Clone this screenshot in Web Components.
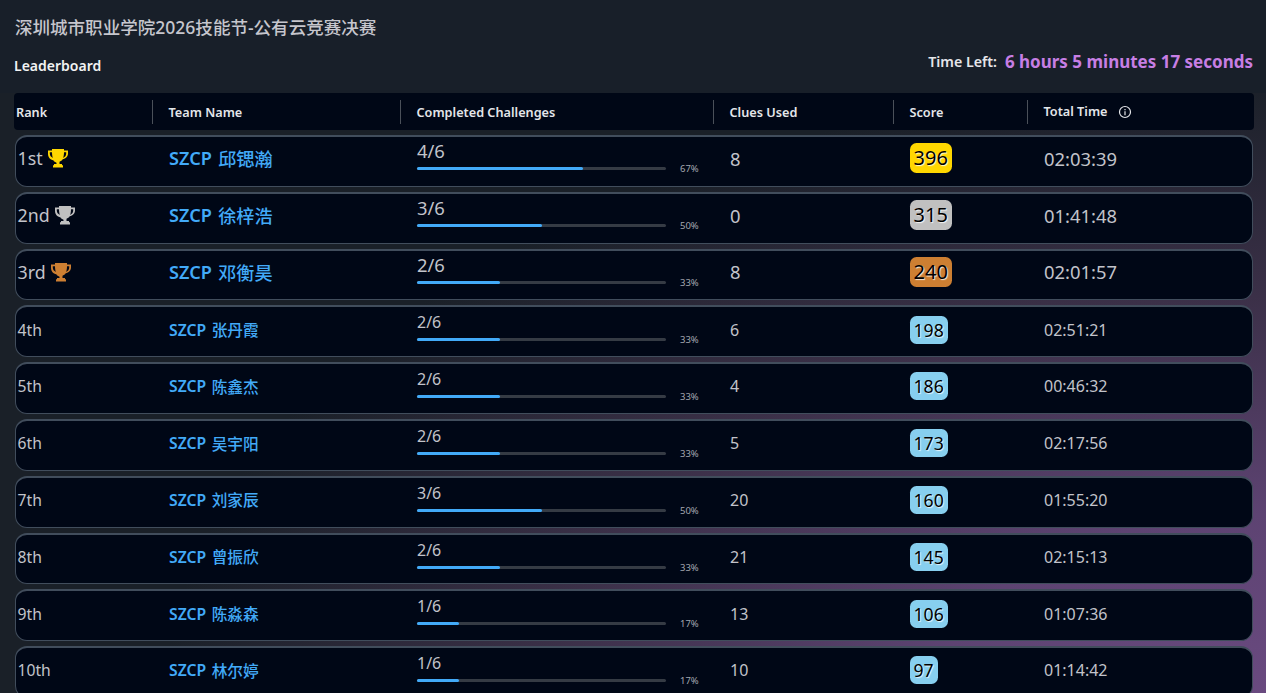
<!DOCTYPE html>
<html><head><meta charset="utf-8">
<style>
html,body{margin:0;height:100%;overflow:hidden}
body{background:#1a2028;font-family:"Noto Sans","Noto Sans CJK SC",sans-serif}
</style></head><body>
<template id="t-app"><style>
:host{display:block;height:693px;overflow:hidden;background:radial-gradient(ellipse 1100px 620px at 1266px 700px,#6a4a80 0%,#5d4372 30%,#3b3048 65%,#1a2028 100%)}
header{box-sizing:border-box;height:93px;background:#181f29;padding:14px 13px 0 15px}
h1{margin:0;font:500 17.55px/26px "Noto Sans","Noto Sans CJK SC",sans-serif;color:#c6c6cd}
.bar{display:flex;justify-content:space-between;align-items:flex-start;margin-top:10px}
.lb{font-size:14px;font-weight:600;color:#f2f3f3;line-height:20px;padding-top:6px;margin-left:-1px}
.tl{display:flex;align-items:center;gap:8px;font-size:14.2px;font-weight:600;color:#e6e6ea;line-height:24px}
.tl b{font-size:17px;font-weight:700;color:#c77ee4}
.list{padding:0 12px 0 14px;display:flex;flex-direction:column}
</style><header><h1><slot name="title"></slot></h1>
<div class="bar"><span class="lb">Leaderboard</span><span class="tl">Time Left: <b>6 hours 5 minutes 17 seconds</b></span></div></header>
<div class="list"><slot></slot></div></template>

<template id="t-head"><style>
:host{display:grid;grid-template-columns:138px 248px 313px 180px 134px 1fr;height:37px;background:#000716;border-radius:4px;align-items:center;font-size:12.7px;font-weight:600;color:#e4e6ea;margin-bottom:5px}
div{height:24px;display:flex;align-items:center;padding-left:15.500px;border-left:1.5px solid #4a5059;box-sizing:border-box}
div:first-of-type{border:0;padding-left:2px}
svg{margin-left:10px}
</style><div>Rank</div><div>Team Name</div><div>Completed Challenges</div><div>Clues Used</div><div>Score</div>
<div><span style="position:relative;top:-1px">Total Time</span><svg width="14" height="14" viewBox="0 0 14 14" fill="none" stroke="#e4e6ea" stroke-width="1.2"><circle cx="7" cy="7" r="5.500"/><path d="M7 6.200V10.200M7 3.900v1.300"/></svg></div></template>

<template id="t-row"><style>
:host{display:grid;grid-template-columns:138.5px 248px 313px 179.5px 134.5px 1fr;height:51.8px;box-sizing:border-box;padding-bottom:4.5px;margin:0 1px 5px .5px;background:#000716;border:1.5px solid #414d5c;border-top-width:2px;border-radius:12px;align-items:center;font-size:16px;color:#c2c3ca}
:host([top]){font-size:18.4px;padding-bottom:6px}
.c{padding-left:15px;display:flex;align-items:center}
.r{padding-left:2px;gap:4px;font-size:15.7px}
:host([top]) .r{font-size:17.8px}
.t{font-size:15.7px;font-weight:600;color:#42aaf8}
:host([top]) .t{font-size:18.1px}
.t span{font-weight:500}
.t span:first-child{font-weight:600;margin-right:.35em}
span.b{display:inline-block;padding:0 4px;height:28px;line-height:28px;font-size:17.6px;border-radius:6.5px;color:#000;background:#87cfef;text-shadow:1px 1px 1px rgba(255,255,255,.85)}
:host([top]) span.b{height:30px;line-height:30px;font-size:20px}
:host([medal="1"]) span.b{background:#ffd700}
:host([medal="2"]) span.b{background:#c0c0c0}
:host([medal="3"]) span.b{background:#cd7f32}
svg{display:none}
:host([medal]) svg{display:block}
</style><div class="c r"><span id="rank"></span><svg id="tr" width="22" height="20" viewBox="0 0 22 20"><path fill="currentColor" d="M5 1h12v1.600h4v3c0 3-2.400 5.300-5.300 5.700-.8 1.300-2 2.100-3.200 2.400V16h2.500v1.200h1V19.500H6v-2.300h1V16h2.500v-1.300c-1.200-.3-2.400-1.100-3.200-2.400C3.400 11.900 1 9.600 1 5.600v-3h4V1zM2.800 4.300v1.300c0 2 1.300 3.600 3 4.300-.5-1.500-.8-3.500-.8-5.600H2.800zm16.400 0H17c0 2.100-.3 4.100-.8 5.600 1.700-.7 3-2.300 3-4.300V4.300z"/></svg></div>
<div class="c t"><span>SZCP</span><span id="team"></span></div><div class="c"><x-progress id="p"></x-progress></div><div class="c" id="clues"></div><div class="c"><span class="b" id="score"></span></div><div class="c" id="time"></div></template>

<template id="t-prog"><style>
:host{display:block;width:283px;position:relative;padding-bottom:5.100px}
.v{line-height:20px;height:20px;display:block}
.tr{width:249px;height:3px;background:#353b44;border-radius:2px;margin-top:6px}
.f{height:100%;background:#42aaf8;border-radius:2px}
.l{position:absolute;left:263px;top:20px;font-size:9.500px;line-height:16px;color:#a4a8b0}
</style><span class="v"></span><div class="tr"><div class="f"></div></div><span class="l"></span></template>

<x-app>
<span slot="title">深圳城市职业学院2026技能节-公有云竞赛决赛</span>
<x-head></x-head>
<x-row top medal="1" rank="1st" team="邱锶瀚" done="4" clues="8" score="396" time="02:03:39"></x-row>
<x-row top medal="2" rank="2nd" team="徐梓浩" done="3" clues="0" score="315" time="01:41:48"></x-row>
<x-row top medal="3" rank="3rd" team="邓衡昊" done="2" clues="8" score="240" time="02:01:57"></x-row>
<x-row rank="4th" team="张丹霞" done="2" clues="6" score="198" time="02:51:21"></x-row>
<x-row rank="5th" team="陈鑫杰" done="2" clues="4" score="186" time="00:46:32"></x-row>
<x-row rank="6th" team="吴宇阳" done="2" clues="5" score="173" time="02:17:56"></x-row>
<x-row rank="7th" team="刘家辰" done="3" clues="20" score="160" time="01:55:20"></x-row>
<x-row rank="8th" team="曾振欣" done="2" clues="21" score="145" time="02:15:13"></x-row>
<x-row rank="9th" team="陈淼森" done="1" clues="13" score="106" time="01:07:36"></x-row>
<x-row rank="10th" team="林尔婷" done="1" clues="10" score="97" time="01:14:42"></x-row>
</x-app>
<script>
const mk=(n,id,init)=>customElements.define(n,class extends HTMLElement{connectedCallback(){if(this.shadowRoot)return;const s=this.attachShadow({mode:'open'});s.appendChild(document.getElementById(id).content.cloneNode(true));init&&init(this,s)}});
mk('x-progress','t-prog');
mk('x-app','t-app');mk('x-head','t-head');
mk('x-row','t-row',(h,s)=>{const a=k=>h.getAttribute(k);for(const k of['rank','team','clues','score','time'])s.getElementById(k).textContent=a(k);
const c={1:'#ffd700',2:'#c0c0c0',3:'#cd7f32'}[a('medal')];if(c)s.getElementById('tr').style.color=c;
const d=+a('done'),r=s.getElementById('p').shadowRoot;r.querySelector('.v').textContent=d+'/6';r.querySelector('.f').style.width=(d/6*100)+'%';r.querySelector('.l').textContent=Math.round(d/6*100)+'%'});
</script>
</body></html>
